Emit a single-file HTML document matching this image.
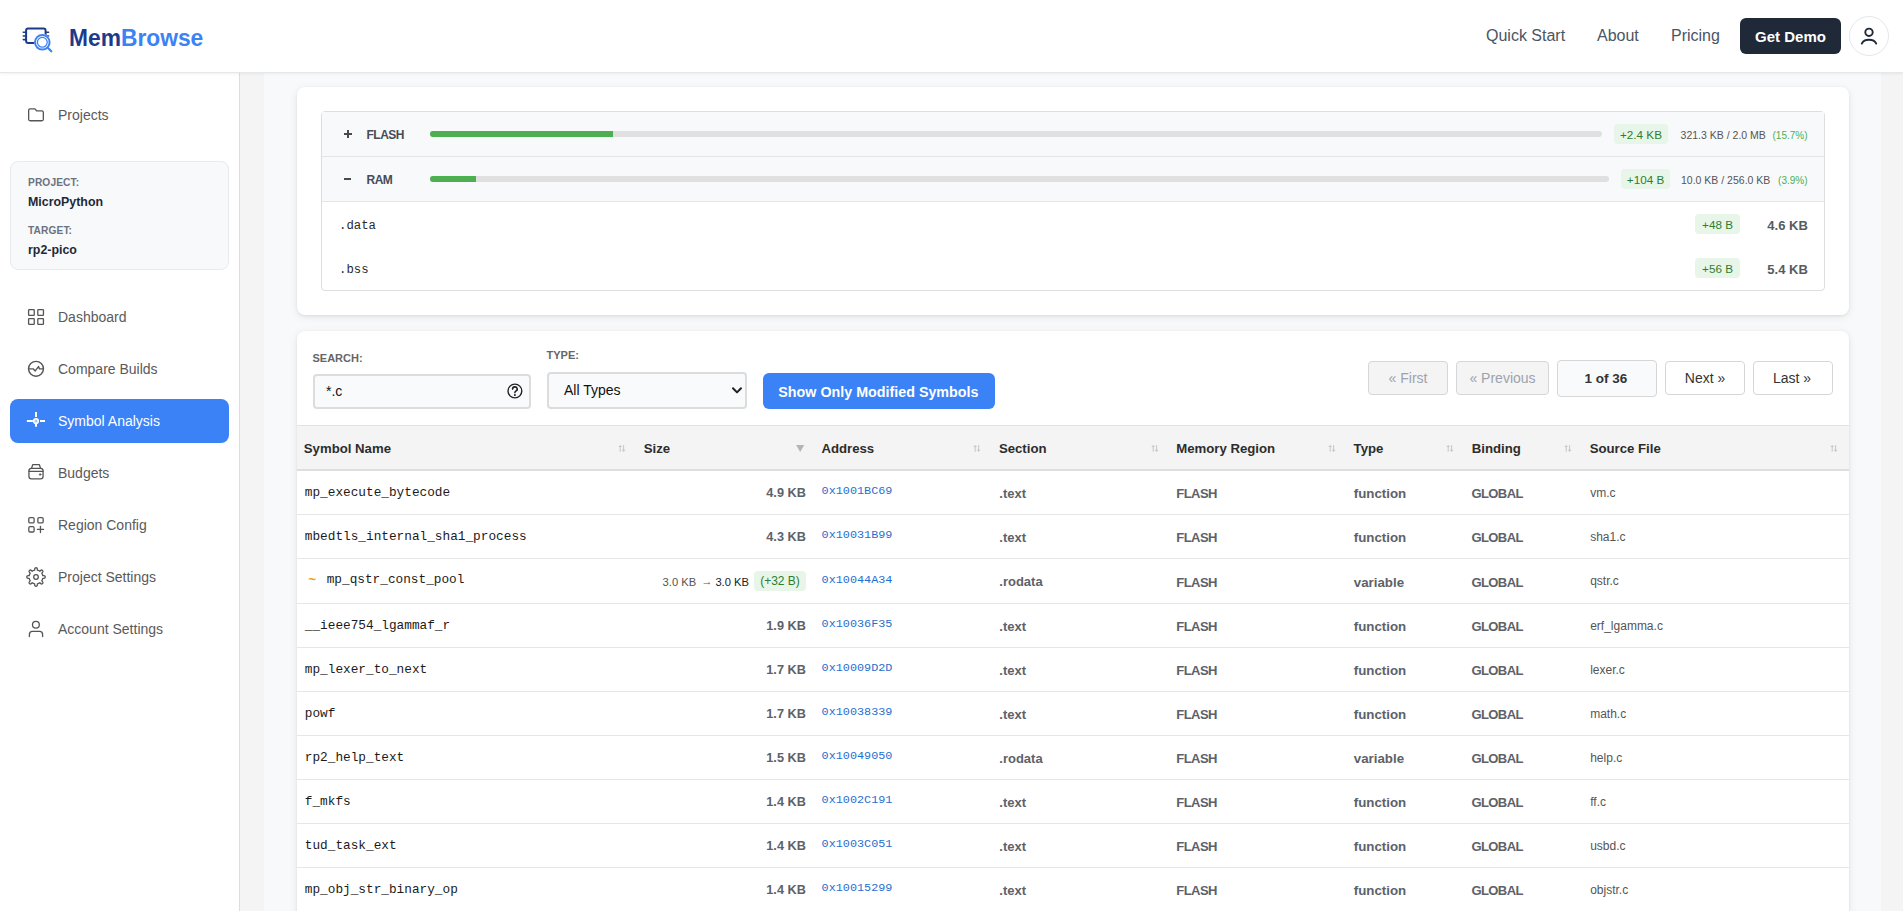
<!DOCTYPE html>
<html><head><meta charset="utf-8">
<style>
*{box-sizing:border-box;margin:0;padding:0}
html,body{width:1903px;height:911px;overflow:hidden}
body{position:relative;background:#f4f4f4;font-family:"Liberation Sans",sans-serif;color:#333}
.abs{position:absolute}
.mono{font-family:"Liberation Mono",monospace}
/* header */
#hdr{position:absolute;left:0;top:0;width:1903px;height:73px;background:#fff;border-bottom:1px solid #e5e7eb;box-shadow:0 1px 3px rgba(0,0,0,.06);z-index:5}
.brand{position:absolute;left:69px;top:25px;font-size:22.8px;font-weight:bold;line-height:26px;letter-spacing:0;transform:scaleY(1.06);transform-origin:0 20px}
.nav{position:absolute;top:27px;font-size:16px;line-height:18px;color:#4b5563}
#demo{position:absolute;left:1740px;top:18px;width:101px;height:36px;border-radius:6px;background:#1f2937;color:#fff;font-weight:bold;font-size:15px;line-height:37px;text-align:center}
#usr{position:absolute;left:1849px;top:16px;width:40px;height:40px;border-radius:50%;border:1px solid #e5e7eb;background:#fff}
/* sidebar */
#side{position:absolute;left:0;top:73px;width:240px;height:838px;background:#fff;border-right:1px solid #dddddd}
.item{position:absolute;left:10px;width:219px;height:44px;border-radius:8px;font-size:14px;color:#5a5a5a;line-height:44px}
.item .t{position:absolute;left:48px;top:0}
.item svg{position:absolute;left:12px;top:8px}
.item.act{background:#3b82f6;color:#fff}
#pcard{position:absolute;left:10px;top:161px;width:219px;height:109px;border-radius:8px;background:#f8f9fb;border:1px solid #e8eaee}
.plab{position:absolute;left:17px;font-size:10.2px;font-weight:bold;color:#6b7280;letter-spacing:.1px;line-height:12px}
.pval{position:absolute;left:17px;font-size:12.4px;font-weight:bold;color:#1f2937;line-height:15px}
/* main */
#inner{position:absolute;left:264px;top:73px;width:1617px;height:838px;background:#f8f9fa}
.badge{background:#e8f5e9;color:#2e7d32;border-radius:4px;text-align:center;white-space:nowrap}
.card{position:absolute;left:297px;width:1552px;background:#fff;border-radius:8px;box-shadow:0 2px 8px rgba(0,0,0,.08),0 1px 3px rgba(0,0,0,.07)}
</style></head>
<body>
<div id="hdr">
  <svg class="abs" style="left:15px;top:15px" width="45" height="45" viewBox="15 15 45 45">
    <rect x="26.1" y="28.6" width="19.5" height="14.3" rx="2" fill="none" stroke="#1e3a8a" stroke-width="2"/>
    <g stroke="#1e3a8a" stroke-width="1.6" stroke-linecap="round"><line x1="23.3" y1="32.3" x2="25.5" y2="32.3"/><line x1="23.3" y1="36" x2="25.5" y2="36"/><line x1="23.3" y1="39.6" x2="25.5" y2="39.6"/><line x1="46.5" y1="32.3" x2="48.6" y2="32.3"/><line x1="46.5" y1="36" x2="48.6" y2="36"/></g>
    <circle cx="42.3" cy="42.3" r="8.3" fill="#fff"/>
    <circle cx="42.3" cy="42.3" r="7.3" fill="none" stroke="#3b82f6" stroke-width="2"/>
    <circle cx="42.3" cy="42.3" r="4.9" fill="none" stroke="#3b82f6" stroke-width="1.3"/>
    <line x1="48.3" y1="48.3" x2="51.3" y2="51.3" stroke="#3b82f6" stroke-width="2.2" stroke-linecap="round"/>
  </svg>
  <div class="brand"><span style="color:#1e3a8a">Mem</span><span style="color:#3b82f6">Browse</span></div>
  <div class="nav" style="left:1486px">Quick Start</div>
  <div class="nav" style="left:1597px">About</div>
  <div class="nav" style="left:1671px">Pricing</div>
  <div id="demo">Get Demo</div>
  <div id="usr"><svg class="abs" style="left:-1px;top:-1px" width="40" height="40" viewBox="1849 16 40 40"><circle cx="1869" cy="32.3" r="3.7" fill="none" stroke="#1f2937" stroke-width="1.9"/><path d="M1861.8 43.6 A7.6 5.6 0 0 1 1876.2 43.6" fill="none" stroke="#1f2937" stroke-width="1.9" stroke-linecap="round"/></svg></div>
</div>

<div id="side">
<div class="item" style="top:20px"><svg width="28" height="28" viewBox="0 0 28 28" fill="none" stroke="#555" stroke-width="1.3" stroke-linecap="round" stroke-linejoin="round"><path d="M6.65 18.25 V9.35 A1.5 1.5 0 0 1 8.15 7.85 H12.9 L14.6 9.8 H19.85 A1.5 1.5 0 0 1 21.35 11.3 V18.25 A1.5 1.5 0 0 1 19.85 19.75 H8.15 A1.5 1.5 0 0 1 6.65 18.25 Z"/></svg><span class="t">Projects</span></div>
<div class="item" style="top:222px"><svg width="28" height="28" viewBox="0 0 28 28" fill="none" stroke="#555" stroke-width="1.3" stroke-linecap="round" stroke-linejoin="round"><rect x="6.6" y="6.65" width="5.65" height="5.65" rx="0.6"/><rect x="15.8" y="6.65" width="5.65" height="5.65" rx="0.6"/><rect x="6.6" y="15.7" width="5.65" height="5.65" rx="0.6"/><rect x="15.8" y="15.7" width="5.65" height="5.65" rx="0.6"/></svg><span class="t">Dashboard</span></div>
<div class="item" style="top:274px"><svg width="28" height="28" viewBox="0 0 28 28" fill="none" stroke="#555" stroke-width="1.3" stroke-linecap="round" stroke-linejoin="round"><circle cx="14" cy="13.85" r="7.45" stroke-width="1.4"/><polyline points="6.6,13.85 11.2,13.85 13.2,15.9 16.5,11.6 17.5,13.85 21.4,13.85" stroke-width="1.4"/></svg><span class="t">Compare Builds</span></div>
<div class="item act" style="top:326px"><svg width="28" height="28" viewBox="0 0 28 28" fill="none" stroke="#555" stroke-width="1.3" stroke-linecap="round" stroke-linejoin="round"><g stroke="#fff" stroke-width="2" stroke-linecap="butt"><line x1="14" y1="4.9" x2="14" y2="9.9"/><line x1="14" y1="16.9" x2="14" y2="19.8"/><line x1="4.9" y1="14" x2="10.9" y2="14"/><line x1="18" y1="14" x2="23" y2="14"/></g><circle cx="14" cy="14" r="2.3" stroke="#fff" stroke-width="1.6" fill="rgba(255,255,255,0.55)"/></svg><span class="t">Symbol Analysis</span></div>
<div class="item" style="top:378px"><svg width="28" height="28" viewBox="0 0 28 28" fill="none" stroke="#555" stroke-width="1.3" stroke-linecap="round" stroke-linejoin="round"><rect x="6.95" y="9.3" width="14.1" height="10.6" rx="2.4"/><line x1="6.95" y1="12.3" x2="21.05" y2="12.3"/><path d="M9.6 9.25 L10.7 5.6 H17.4 L18.5 9.25"/><circle cx="18.1" cy="15.5" r="0.8" fill="#555" stroke-width="0.8"/></svg><span class="t">Budgets</span></div>
<div class="item" style="top:430px"><svg width="28" height="28" viewBox="0 0 28 28" fill="none" stroke="#555" stroke-width="1.3" stroke-linecap="round" stroke-linejoin="round"><rect x="6.8" y="6.65" width="5.3" height="5.3" rx="1.2"/><rect x="15.85" y="6.65" width="5.3" height="5.3" rx="1.2"/><rect x="6.8" y="15.7" width="5.3" height="5.3" rx="1.2"/><line x1="18.45" y1="15.5" x2="18.45" y2="21.5"/><line x1="15.45" y1="18.45" x2="21.55" y2="18.45"/></svg><span class="t">Region Config</span></div>
<div class="item" style="top:482px"><svg width="28" height="28" viewBox="0 0 28 28" fill="none" stroke="#555" stroke-width="1.3" stroke-linecap="round" stroke-linejoin="round"><path d="M12.65 7.23 L12.65 6.10 A1.35 1.35 0 0 1 15.35 6.10 L15.35 7.23 A6.90 6.90 0 0 1 17.83 8.26 L18.63 7.46 A1.35 1.35 0 0 1 20.54 9.37 L19.74 10.17 A6.90 6.90 0 0 1 20.77 12.65 L21.90 12.65 A1.35 1.35 0 0 1 21.90 15.35 L20.77 15.35 A6.90 6.90 0 0 1 19.74 17.83 L20.54 18.63 A1.35 1.35 0 0 1 18.63 20.54 L17.83 19.74 A6.90 6.90 0 0 1 15.35 20.77 L15.35 21.90 A1.35 1.35 0 0 1 12.65 21.90 L12.65 20.77 A6.90 6.90 0 0 1 10.17 19.74 L9.37 20.54 A1.35 1.35 0 0 1 7.46 18.63 L8.26 17.83 A6.90 6.90 0 0 1 7.23 15.35 L6.10 15.35 A1.35 1.35 0 0 1 6.10 12.65 L7.23 12.65 A6.90 6.90 0 0 1 8.26 10.17 L7.46 9.37 A1.35 1.35 0 0 1 9.37 7.46 L10.17 8.26 A6.90 6.90 0 0 1 12.65 7.23 Z" stroke-width="1.3"/><circle cx="14" cy="14" r="2.3"/></svg><span class="t">Project Settings</span></div>
<div class="item" style="top:534px"><svg width="28" height="28" viewBox="0 0 28 28" fill="none" stroke="#555" stroke-width="1.3" stroke-linecap="round" stroke-linejoin="round"><circle cx="13.9" cy="9.7" r="3.4"/><path d="M7.4 21.6 V19.4 A3 3 0 0 1 10.4 16.4 H17.6 A3 3 0 0 1 20.6 19.4 V21.6"/></svg><span class="t">Account Settings</span></div>
<div id="pcard" style="top:88px">
  <div class="plab" style="top:15px">PROJECT:</div>
  <div class="pval" style="top:33px">MicroPython</div>
  <div class="plab" style="top:63px">TARGET:</div>
  <div class="pval" style="top:81px">rp2-pico</div>
</div>
</div>

<div id="inner"></div>
<div class="card" style="top:87px;height:228px"></div>
<!--MAIN-->
<div class="abs" style="left:321.00px;top:111.00px;width:1504.00px;height:180.00px;border:1px solid #dedede;border-radius:4px;overflow:hidden;background:#fff"></div>
<div class="abs" style="left:322.00px;top:112.00px;width:1502.00px;height:44.00px;background:#f8f9fa"></div>
<div class="abs" style="left:322.00px;top:156.00px;width:1502.00px;height:1.00px;background:#e5e5e5"></div>
<div class="abs" style="left:322.00px;top:157.00px;width:1502.00px;height:44.00px;background:#f8f9fa"></div>
<div class="abs" style="left:322.00px;top:201.00px;width:1502.00px;height:1.00px;background:#e5e5e5"></div>
<div class="abs" style="left:343.80px;top:133.00px;width:7.80px;height:2.00px;background:#4a4a4a"></div>
<div class="abs" style="left:346.70px;top:129.90px;width:2.00px;height:8.20px;background:#4a4a4a"></div>
<div class="abs" style="left:343.80px;top:178.00px;width:7.40px;height:2.00px;background:#4a4a4a"></div>
<div class="abs" style="top:128.94px;font-size:12px;line-height:12px;color:#474c55;left:366.50px;font-weight:bold;letter-spacing:-0.5px;;white-space:nowrap">FLASH</div>
<div class="abs" style="top:173.84px;font-size:12px;line-height:12px;color:#474c55;left:366.50px;font-weight:bold;letter-spacing:-0.5px;;white-space:nowrap">RAM</div>
<div class="abs" style="left:430.00px;top:131.00px;width:1172.00px;height:6.00px;background:#e0e0e0;border-radius:3px"></div>
<div class="abs" style="left:430.00px;top:131.00px;width:183.00px;height:6.00px;background:#4caf50;border-radius:3px 0 0 3px"></div>
<div class="abs" style="left:430.00px;top:176.00px;width:1179.00px;height:6.00px;background:#e0e0e0;border-radius:3px"></div>
<div class="abs" style="left:430.00px;top:176.00px;width:46.00px;height:6.00px;background:#4caf50;border-radius:3px 0 0 3px"></div>
<div class="abs badge" style="left:1614.00px;top:124.00px;width:54.00px;height:19.50px;font-size:11.7px;line-height:22.70px">+2.4 KB</div>
<div class="abs" style="top:130.11px;font-size:10.5px;line-height:10.5px;color:#555;right:137.20px;;white-space:nowrap">321.3 KB / 2.0 MB</div>
<div class="abs" style="top:130.53px;font-size:10px;line-height:10px;color:#4caf50;right:95.50px;;white-space:nowrap">(15.7%)</div>
<div class="abs badge" style="left:1621.00px;top:169.00px;width:49.00px;height:19.60px;font-size:11.7px;line-height:22.80px">+104 B</div>
<div class="abs" style="top:175.11px;font-size:10.5px;line-height:10.5px;color:#555;right:132.70px;;white-space:nowrap">10.0 KB / 256.0 KB</div>
<div class="abs" style="top:175.53px;font-size:10px;line-height:10px;color:#4caf50;right:95.50px;;white-space:nowrap">(3.9%)</div>
<div class="abs" style="top:219.77px;font-size:12.3px;line-height:12.3px;color:#2a2a2a;left:339.00px;font-family:'Liberation Mono',monospace;;white-space:nowrap">.data</div>
<div class="abs" style="top:263.67px;font-size:12.3px;line-height:12.3px;color:#2a2a2a;left:339.00px;font-family:'Liberation Mono',monospace;;white-space:nowrap">.bss</div>
<div class="abs badge" style="left:1695.00px;top:214.00px;width:45.00px;height:19.60px;font-size:11.7px;line-height:22.80px">+48 B</div>
<div class="abs badge" style="left:1695.00px;top:258.00px;width:45.00px;height:19.70px;font-size:11.7px;line-height:22.90px">+56 B</div>
<div class="abs" style="top:218.90px;font-size:13px;line-height:13px;color:#555b63;right:95.20px;font-weight:bold;;white-space:nowrap">4.6 KB</div>
<div class="abs" style="top:262.90px;font-size:13px;line-height:13px;color:#555b63;right:95.20px;font-weight:bold;;white-space:nowrap">5.4 KB</div>
<div class="card" style="top:331px;height:600px"></div>
<div class="abs" style="top:352.59px;font-size:11px;line-height:11px;color:#666;left:312.50px;font-weight:bold;;white-space:nowrap">SEARCH:</div>
<div class="abs" style="top:350.49px;font-size:11px;line-height:11px;color:#666;left:546.50px;font-weight:bold;;white-space:nowrap">TYPE:</div>
<div class="abs" style="left:313.00px;top:373.50px;width:218.00px;height:35.00px;border:2px solid #dcdcdc;border-radius:4px;background:#f9fafb"></div>
<div class="abs" style="top:384.05px;font-size:14px;line-height:14px;color:#111;left:326.00px;;white-space:nowrap">*.c</div>
<svg class="abs" style="left:505px;top:381px" width="20" height="20" viewBox="505 381 20 20"><circle cx="514.9" cy="391" r="6.9" fill="none" stroke="#222" stroke-width="1.4"/><path d="M512.6 389.1 A2.3 2.2 0 1 1 515.8 391.1 Q514.9 391.6 514.9 392.6" fill="none" stroke="#222" stroke-width="1.6" stroke-linecap="round"/><circle cx="514.9" cy="394.9" r="1" fill="#222"/></svg>
<div class="abs" style="left:547.00px;top:371.50px;width:200.00px;height:37.00px;border:2px solid #dcdcdc;border-radius:4px;background:#f9fafb"></div>
<div class="abs" style="top:383.25px;font-size:14px;line-height:14px;color:#111;left:564.00px;;white-space:nowrap">All Types</div>
<svg class="abs" style="left:728px;top:383px" width="18" height="14" viewBox="728 383 18 14"><polyline points="733,388.2 737,392.4 741,388.2" fill="none" stroke="#222" stroke-width="2" stroke-linecap="round" stroke-linejoin="round"/></svg>
<div class="abs" style="left:763.00px;top:373.00px;width:232.00px;height:36.00px;background:#3b82f6;border-radius:6px"></div>
<div class="abs" style="top:385.20px;font-size:14.3px;line-height:14.3px;color:#fff;left:778.30px;font-weight:bold;;white-space:nowrap">Show Only Modified Symbols</div>
<div class="abs" style="left:1368.00px;top:361.00px;width:80.00px;height:34.00px;background:#f4f4f4;border:1px solid #d6d6d6;border-radius:4px"></div><div class="abs" style="left:1368.00px;width:80px;top:371.15px;font-size:14px;line-height:14px;color:#9ca3af;text-align:center;white-space:nowrap;">&laquo; First</div>
<div class="abs" style="left:1456.00px;top:361.00px;width:93.00px;height:34.00px;background:#f4f4f4;border:1px solid #d6d6d6;border-radius:4px"></div><div class="abs" style="left:1456.00px;width:93px;top:371.15px;font-size:14px;line-height:14px;color:#9ca3af;text-align:center;white-space:nowrap;">&laquo; Previous</div>
<div class="abs" style="left:1557.00px;top:360.00px;width:100.00px;height:37.00px;background:#f9fafb;border:1px solid #d6d6d6;border-radius:4px"></div><div class="abs" style="left:1556.00px;width:100px;top:372.47px;font-size:13.5px;line-height:13.5px;color:#333;text-align:center;white-space:nowrap;font-weight:bold">1 of 36</div>
<div class="abs" style="left:1665.00px;top:361.00px;width:80.00px;height:34.00px;background:#fff;border:1px solid #d6d6d6;border-radius:4px"></div><div class="abs" style="left:1665.00px;width:80px;top:371.15px;font-size:14px;line-height:14px;color:#333;text-align:center;white-space:nowrap;">Next &raquo;</div>
<div class="abs" style="left:1753.00px;top:361.00px;width:80.00px;height:34.00px;background:#fff;border:1px solid #d6d6d6;border-radius:4px"></div><div class="abs" style="left:1752.00px;width:80px;top:371.15px;font-size:14px;line-height:14px;color:#333;text-align:center;white-space:nowrap;">Last &raquo;</div>
<div class="abs" style="left:297.00px;top:425.00px;width:1552.00px;height:1.00px;background:#e3e3e3"></div>
<div class="abs" style="left:297.00px;top:426.00px;width:1552.00px;height:43.00px;background:#f4f4f4"></div>
<div class="abs" style="left:297.00px;top:469.00px;width:1552.00px;height:2.00px;background:#dedede"></div>
<div class="abs" style="top:441.63px;font-size:13.2px;line-height:13.2px;color:#2d2d2d;left:303.80px;font-weight:bold;;white-space:nowrap">Symbol Name</div>
<svg class="abs" style="left:618.20px;top:444px" width="9" height="9" viewBox="0 0 9 9" fill="#c6c6c6" stroke="#c6c6c6"><line x1="2.2" y1="2" x2="2.2" y2="7.8" stroke-width="1"/><polygon points="0.3,3.1 2.2,0.9 4.1,3.1" stroke="none"/><line x1="5.6" y1="1.1" x2="5.6" y2="6.9" stroke-width="1"/><polygon points="3.7,5.8 5.6,8 7.5,5.8" stroke="none"/></svg>
<div class="abs" style="top:441.63px;font-size:13.2px;line-height:13.2px;color:#2d2d2d;left:643.80px;font-weight:bold;;white-space:nowrap">Size</div>
<svg class="abs" style="left:795.70px;top:444px" width="10" height="9" viewBox="0 0 10 9"><polygon points="0.1,1 8.3,1 4.2,7.9" fill="#b5b5b5"/></svg>
<div class="abs" style="top:441.63px;font-size:13.2px;line-height:13.2px;color:#2d2d2d;left:821.40px;font-weight:bold;;white-space:nowrap">Address</div>
<svg class="abs" style="left:973.20px;top:444px" width="9" height="9" viewBox="0 0 9 9" fill="#c6c6c6" stroke="#c6c6c6"><line x1="2.2" y1="2" x2="2.2" y2="7.8" stroke-width="1"/><polygon points="0.3,3.1 2.2,0.9 4.1,3.1" stroke="none"/><line x1="5.6" y1="1.1" x2="5.6" y2="6.9" stroke-width="1"/><polygon points="3.7,5.8 5.6,8 7.5,5.8" stroke="none"/></svg>
<div class="abs" style="top:441.63px;font-size:13.2px;line-height:13.2px;color:#2d2d2d;left:998.90px;font-weight:bold;;white-space:nowrap">Section</div>
<svg class="abs" style="left:1151.20px;top:444px" width="9" height="9" viewBox="0 0 9 9" fill="#c6c6c6" stroke="#c6c6c6"><line x1="2.2" y1="2" x2="2.2" y2="7.8" stroke-width="1"/><polygon points="0.3,3.1 2.2,0.9 4.1,3.1" stroke="none"/><line x1="5.6" y1="1.1" x2="5.6" y2="6.9" stroke-width="1"/><polygon points="3.7,5.8 5.6,8 7.5,5.8" stroke="none"/></svg>
<div class="abs" style="top:441.63px;font-size:13.2px;line-height:13.2px;color:#2d2d2d;left:1176.20px;font-weight:bold;;white-space:nowrap">Memory Region</div>
<svg class="abs" style="left:1328.20px;top:444px" width="9" height="9" viewBox="0 0 9 9" fill="#c6c6c6" stroke="#c6c6c6"><line x1="2.2" y1="2" x2="2.2" y2="7.8" stroke-width="1"/><polygon points="0.3,3.1 2.2,0.9 4.1,3.1" stroke="none"/><line x1="5.6" y1="1.1" x2="5.6" y2="6.9" stroke-width="1"/><polygon points="3.7,5.8 5.6,8 7.5,5.8" stroke="none"/></svg>
<div class="abs" style="top:441.63px;font-size:13.2px;line-height:13.2px;color:#2d2d2d;left:1353.60px;font-weight:bold;;white-space:nowrap">Type</div>
<svg class="abs" style="left:1446.20px;top:444px" width="9" height="9" viewBox="0 0 9 9" fill="#c6c6c6" stroke="#c6c6c6"><line x1="2.2" y1="2" x2="2.2" y2="7.8" stroke-width="1"/><polygon points="0.3,3.1 2.2,0.9 4.1,3.1" stroke="none"/><line x1="5.6" y1="1.1" x2="5.6" y2="6.9" stroke-width="1"/><polygon points="3.7,5.8 5.6,8 7.5,5.8" stroke="none"/></svg>
<div class="abs" style="top:441.63px;font-size:13.2px;line-height:13.2px;color:#2d2d2d;left:1471.80px;font-weight:bold;;white-space:nowrap">Binding</div>
<svg class="abs" style="left:1564.20px;top:444px" width="9" height="9" viewBox="0 0 9 9" fill="#c6c6c6" stroke="#c6c6c6"><line x1="2.2" y1="2" x2="2.2" y2="7.8" stroke-width="1"/><polygon points="0.3,3.1 2.2,0.9 4.1,3.1" stroke="none"/><line x1="5.6" y1="1.1" x2="5.6" y2="6.9" stroke-width="1"/><polygon points="3.7,5.8 5.6,8 7.5,5.8" stroke="none"/></svg>
<div class="abs" style="top:441.63px;font-size:13.2px;line-height:13.2px;color:#2d2d2d;left:1589.70px;font-weight:bold;;white-space:nowrap">Source File</div>
<svg class="abs" style="left:1830.20px;top:444px" width="9" height="9" viewBox="0 0 9 9" fill="#c6c6c6" stroke="#c6c6c6"><line x1="2.2" y1="2" x2="2.2" y2="7.8" stroke-width="1"/><polygon points="0.3,3.1 2.2,0.9 4.1,3.1" stroke="none"/><line x1="5.6" y1="1.1" x2="5.6" y2="6.9" stroke-width="1"/><polygon points="3.7,5.8 5.6,8 7.5,5.8" stroke="none"/></svg>
<div class="abs" style="left:297.00px;top:514.00px;width:1552.00px;height:1.00px;background:#e6e6e6"></div>
<div class="abs" style="top:487.13px;font-size:12.75px;line-height:12.75px;color:#1a1a1a;left:304.80px;font-family:'Liberation Mono',monospace;;white-space:nowrap">mp_execute_bytecode</div>
<div class="abs" style="top:486.95px;font-size:12.7px;line-height:12.7px;color:#5d6269;right:1097.20px;font-weight:bold;;white-space:nowrap">4.9 KB</div>
<div class="abs" style="top:486.16px;font-size:11.8px;line-height:11.8px;color:#1f6fd1;left:821.60px;font-family:'Liberation Mono',monospace;;white-space:nowrap">0x1001BC69</div>
<div class="abs" style="top:486.70px;font-size:13px;line-height:13px;color:#5d6269;left:999.30px;font-weight:bold;;white-space:nowrap">.text</div>
<div class="abs" style="top:487.00px;font-size:13px;line-height:13px;color:#5d6269;left:1176.30px;font-weight:bold;letter-spacing:-0.55px;;white-space:nowrap">FLASH</div>
<div class="abs" style="top:487.24px;font-size:13.3px;line-height:13.3px;color:#5d6269;left:1353.80px;font-weight:bold;;white-space:nowrap">function</div>
<div class="abs" style="top:487.00px;font-size:13px;line-height:13px;color:#5d6269;left:1471.50px;font-weight:bold;letter-spacing:-0.6px;;white-space:nowrap">GLOBAL</div>
<div class="abs" style="top:486.94px;font-size:12px;line-height:12px;color:#555;left:1590.20px;;white-space:nowrap">vm.c</div>
<div class="abs" style="left:297.00px;top:558.00px;width:1552.00px;height:1.00px;background:#e6e6e6"></div>
<div class="abs" style="top:531.13px;font-size:12.75px;line-height:12.75px;color:#1a1a1a;left:304.80px;font-family:'Liberation Mono',monospace;;white-space:nowrap">mbedtls_internal_sha1_process</div>
<div class="abs" style="top:530.95px;font-size:12.7px;line-height:12.7px;color:#5d6269;right:1097.20px;font-weight:bold;;white-space:nowrap">4.3 KB</div>
<div class="abs" style="top:530.16px;font-size:11.8px;line-height:11.8px;color:#1f6fd1;left:821.60px;font-family:'Liberation Mono',monospace;;white-space:nowrap">0x10031B99</div>
<div class="abs" style="top:530.70px;font-size:13px;line-height:13px;color:#5d6269;left:999.30px;font-weight:bold;;white-space:nowrap">.text</div>
<div class="abs" style="top:531.00px;font-size:13px;line-height:13px;color:#5d6269;left:1176.30px;font-weight:bold;letter-spacing:-0.55px;;white-space:nowrap">FLASH</div>
<div class="abs" style="top:531.24px;font-size:13.3px;line-height:13.3px;color:#5d6269;left:1353.80px;font-weight:bold;;white-space:nowrap">function</div>
<div class="abs" style="top:531.00px;font-size:13px;line-height:13px;color:#5d6269;left:1471.50px;font-weight:bold;letter-spacing:-0.6px;;white-space:nowrap">GLOBAL</div>
<div class="abs" style="top:530.94px;font-size:12px;line-height:12px;color:#555;left:1590.20px;;white-space:nowrap">sha1.c</div>
<div class="abs" style="left:297.00px;top:603.00px;width:1552.00px;height:1.00px;background:#e6e6e6"></div>
<div class="abs" style="top:573.65px;font-size:13.5px;line-height:13.5px;color:#f59e0b;left:308.30px;font-weight:bold;font-family:'Liberation Mono',monospace;;white-space:nowrap">~</div>
<div class="abs" style="top:574.43px;font-size:12.75px;line-height:12.75px;color:#1a1a1a;left:326.70px;font-family:'Liberation Mono',monospace;;white-space:nowrap">mp_qstr_const_pool</div>
<div class="abs" style="top:576.52px;font-size:11.2px;line-height:11.2px;color:#555;left:662.60px;;white-space:nowrap">3.0 KB</div>
<div class="abs" style="top:576.29px;font-size:11px;line-height:11px;color:#555;left:701.50px;;white-space:nowrap">&rarr;</div>
<div class="abs" style="top:576.52px;font-size:11.2px;line-height:11.2px;color:#222;left:715.40px;;white-space:nowrap">3.0 KB</div>
<div class="abs badge" style="left:754px;top:571.20px;width:52px;height:19.6px;font-size:12px;line-height:20.6px">(+32 B)</div>
<div class="abs" style="top:574.66px;font-size:11.8px;line-height:11.8px;color:#1f6fd1;left:821.60px;font-family:'Liberation Mono',monospace;;white-space:nowrap">0x10044A34</div>
<div class="abs" style="top:575.20px;font-size:13px;line-height:13px;color:#5d6269;left:999.30px;font-weight:bold;;white-space:nowrap">.rodata</div>
<div class="abs" style="top:575.50px;font-size:13px;line-height:13px;color:#5d6269;left:1176.30px;font-weight:bold;letter-spacing:-0.55px;;white-space:nowrap">FLASH</div>
<div class="abs" style="top:575.74px;font-size:13.3px;line-height:13.3px;color:#5d6269;left:1353.80px;font-weight:bold;;white-space:nowrap">variable</div>
<div class="abs" style="top:575.50px;font-size:13px;line-height:13px;color:#5d6269;left:1471.50px;font-weight:bold;letter-spacing:-0.6px;;white-space:nowrap">GLOBAL</div>
<div class="abs" style="top:575.44px;font-size:12px;line-height:12px;color:#555;left:1590.20px;;white-space:nowrap">qstr.c</div>
<div class="abs" style="left:297.00px;top:647.00px;width:1552.00px;height:1.00px;background:#e6e6e6"></div>
<div class="abs" style="top:620.13px;font-size:12.75px;line-height:12.75px;color:#1a1a1a;left:304.80px;font-family:'Liberation Mono',monospace;;white-space:nowrap">__ieee754_lgammaf_r</div>
<div class="abs" style="top:619.95px;font-size:12.7px;line-height:12.7px;color:#5d6269;right:1097.20px;font-weight:bold;;white-space:nowrap">1.9 KB</div>
<div class="abs" style="top:619.16px;font-size:11.8px;line-height:11.8px;color:#1f6fd1;left:821.60px;font-family:'Liberation Mono',monospace;;white-space:nowrap">0x10036F35</div>
<div class="abs" style="top:619.70px;font-size:13px;line-height:13px;color:#5d6269;left:999.30px;font-weight:bold;;white-space:nowrap">.text</div>
<div class="abs" style="top:620.00px;font-size:13px;line-height:13px;color:#5d6269;left:1176.30px;font-weight:bold;letter-spacing:-0.55px;;white-space:nowrap">FLASH</div>
<div class="abs" style="top:620.24px;font-size:13.3px;line-height:13.3px;color:#5d6269;left:1353.80px;font-weight:bold;;white-space:nowrap">function</div>
<div class="abs" style="top:620.00px;font-size:13px;line-height:13px;color:#5d6269;left:1471.50px;font-weight:bold;letter-spacing:-0.6px;;white-space:nowrap">GLOBAL</div>
<div class="abs" style="top:619.94px;font-size:12px;line-height:12px;color:#555;left:1590.20px;;white-space:nowrap">erf_lgamma.c</div>
<div class="abs" style="left:297.00px;top:691.00px;width:1552.00px;height:1.00px;background:#e6e6e6"></div>
<div class="abs" style="top:664.13px;font-size:12.75px;line-height:12.75px;color:#1a1a1a;left:304.80px;font-family:'Liberation Mono',monospace;;white-space:nowrap">mp_lexer_to_next</div>
<div class="abs" style="top:663.95px;font-size:12.7px;line-height:12.7px;color:#5d6269;right:1097.20px;font-weight:bold;;white-space:nowrap">1.7 KB</div>
<div class="abs" style="top:663.16px;font-size:11.8px;line-height:11.8px;color:#1f6fd1;left:821.60px;font-family:'Liberation Mono',monospace;;white-space:nowrap">0x10009D2D</div>
<div class="abs" style="top:663.70px;font-size:13px;line-height:13px;color:#5d6269;left:999.30px;font-weight:bold;;white-space:nowrap">.text</div>
<div class="abs" style="top:664.00px;font-size:13px;line-height:13px;color:#5d6269;left:1176.30px;font-weight:bold;letter-spacing:-0.55px;;white-space:nowrap">FLASH</div>
<div class="abs" style="top:664.24px;font-size:13.3px;line-height:13.3px;color:#5d6269;left:1353.80px;font-weight:bold;;white-space:nowrap">function</div>
<div class="abs" style="top:664.00px;font-size:13px;line-height:13px;color:#5d6269;left:1471.50px;font-weight:bold;letter-spacing:-0.6px;;white-space:nowrap">GLOBAL</div>
<div class="abs" style="top:663.94px;font-size:12px;line-height:12px;color:#555;left:1590.20px;;white-space:nowrap">lexer.c</div>
<div class="abs" style="left:297.00px;top:735.00px;width:1552.00px;height:1.00px;background:#e6e6e6"></div>
<div class="abs" style="top:708.13px;font-size:12.75px;line-height:12.75px;color:#1a1a1a;left:304.80px;font-family:'Liberation Mono',monospace;;white-space:nowrap">powf</div>
<div class="abs" style="top:707.95px;font-size:12.7px;line-height:12.7px;color:#5d6269;right:1097.20px;font-weight:bold;;white-space:nowrap">1.7 KB</div>
<div class="abs" style="top:707.16px;font-size:11.8px;line-height:11.8px;color:#1f6fd1;left:821.60px;font-family:'Liberation Mono',monospace;;white-space:nowrap">0x10038339</div>
<div class="abs" style="top:707.70px;font-size:13px;line-height:13px;color:#5d6269;left:999.30px;font-weight:bold;;white-space:nowrap">.text</div>
<div class="abs" style="top:708.00px;font-size:13px;line-height:13px;color:#5d6269;left:1176.30px;font-weight:bold;letter-spacing:-0.55px;;white-space:nowrap">FLASH</div>
<div class="abs" style="top:708.24px;font-size:13.3px;line-height:13.3px;color:#5d6269;left:1353.80px;font-weight:bold;;white-space:nowrap">function</div>
<div class="abs" style="top:708.00px;font-size:13px;line-height:13px;color:#5d6269;left:1471.50px;font-weight:bold;letter-spacing:-0.6px;;white-space:nowrap">GLOBAL</div>
<div class="abs" style="top:707.94px;font-size:12px;line-height:12px;color:#555;left:1590.20px;;white-space:nowrap">math.c</div>
<div class="abs" style="left:297.00px;top:779.00px;width:1552.00px;height:1.00px;background:#e6e6e6"></div>
<div class="abs" style="top:752.13px;font-size:12.75px;line-height:12.75px;color:#1a1a1a;left:304.80px;font-family:'Liberation Mono',monospace;;white-space:nowrap">rp2_help_text</div>
<div class="abs" style="top:751.95px;font-size:12.7px;line-height:12.7px;color:#5d6269;right:1097.20px;font-weight:bold;;white-space:nowrap">1.5 KB</div>
<div class="abs" style="top:751.16px;font-size:11.8px;line-height:11.8px;color:#1f6fd1;left:821.60px;font-family:'Liberation Mono',monospace;;white-space:nowrap">0x10049050</div>
<div class="abs" style="top:751.70px;font-size:13px;line-height:13px;color:#5d6269;left:999.30px;font-weight:bold;;white-space:nowrap">.rodata</div>
<div class="abs" style="top:752.00px;font-size:13px;line-height:13px;color:#5d6269;left:1176.30px;font-weight:bold;letter-spacing:-0.55px;;white-space:nowrap">FLASH</div>
<div class="abs" style="top:752.24px;font-size:13.3px;line-height:13.3px;color:#5d6269;left:1353.80px;font-weight:bold;;white-space:nowrap">variable</div>
<div class="abs" style="top:752.00px;font-size:13px;line-height:13px;color:#5d6269;left:1471.50px;font-weight:bold;letter-spacing:-0.6px;;white-space:nowrap">GLOBAL</div>
<div class="abs" style="top:751.94px;font-size:12px;line-height:12px;color:#555;left:1590.20px;;white-space:nowrap">help.c</div>
<div class="abs" style="left:297.00px;top:823.00px;width:1552.00px;height:1.00px;background:#e6e6e6"></div>
<div class="abs" style="top:796.13px;font-size:12.75px;line-height:12.75px;color:#1a1a1a;left:304.80px;font-family:'Liberation Mono',monospace;;white-space:nowrap">f_mkfs</div>
<div class="abs" style="top:795.95px;font-size:12.7px;line-height:12.7px;color:#5d6269;right:1097.20px;font-weight:bold;;white-space:nowrap">1.4 KB</div>
<div class="abs" style="top:795.16px;font-size:11.8px;line-height:11.8px;color:#1f6fd1;left:821.60px;font-family:'Liberation Mono',monospace;;white-space:nowrap">0x1002C191</div>
<div class="abs" style="top:795.70px;font-size:13px;line-height:13px;color:#5d6269;left:999.30px;font-weight:bold;;white-space:nowrap">.text</div>
<div class="abs" style="top:796.00px;font-size:13px;line-height:13px;color:#5d6269;left:1176.30px;font-weight:bold;letter-spacing:-0.55px;;white-space:nowrap">FLASH</div>
<div class="abs" style="top:796.24px;font-size:13.3px;line-height:13.3px;color:#5d6269;left:1353.80px;font-weight:bold;;white-space:nowrap">function</div>
<div class="abs" style="top:796.00px;font-size:13px;line-height:13px;color:#5d6269;left:1471.50px;font-weight:bold;letter-spacing:-0.6px;;white-space:nowrap">GLOBAL</div>
<div class="abs" style="top:795.94px;font-size:12px;line-height:12px;color:#555;left:1590.20px;;white-space:nowrap">ff.c</div>
<div class="abs" style="left:297.00px;top:867.00px;width:1552.00px;height:1.00px;background:#e6e6e6"></div>
<div class="abs" style="top:840.13px;font-size:12.75px;line-height:12.75px;color:#1a1a1a;left:304.80px;font-family:'Liberation Mono',monospace;;white-space:nowrap">tud_task_ext</div>
<div class="abs" style="top:839.95px;font-size:12.7px;line-height:12.7px;color:#5d6269;right:1097.20px;font-weight:bold;;white-space:nowrap">1.4 KB</div>
<div class="abs" style="top:839.16px;font-size:11.8px;line-height:11.8px;color:#1f6fd1;left:821.60px;font-family:'Liberation Mono',monospace;;white-space:nowrap">0x1003C051</div>
<div class="abs" style="top:839.70px;font-size:13px;line-height:13px;color:#5d6269;left:999.30px;font-weight:bold;;white-space:nowrap">.text</div>
<div class="abs" style="top:840.00px;font-size:13px;line-height:13px;color:#5d6269;left:1176.30px;font-weight:bold;letter-spacing:-0.55px;;white-space:nowrap">FLASH</div>
<div class="abs" style="top:840.24px;font-size:13.3px;line-height:13.3px;color:#5d6269;left:1353.80px;font-weight:bold;;white-space:nowrap">function</div>
<div class="abs" style="top:840.00px;font-size:13px;line-height:13px;color:#5d6269;left:1471.50px;font-weight:bold;letter-spacing:-0.6px;;white-space:nowrap">GLOBAL</div>
<div class="abs" style="top:839.94px;font-size:12px;line-height:12px;color:#555;left:1590.20px;;white-space:nowrap">usbd.c</div>
<div class="abs" style="top:884.13px;font-size:12.75px;line-height:12.75px;color:#1a1a1a;left:304.80px;font-family:'Liberation Mono',monospace;;white-space:nowrap">mp_obj_str_binary_op</div>
<div class="abs" style="top:883.95px;font-size:12.7px;line-height:12.7px;color:#5d6269;right:1097.20px;font-weight:bold;;white-space:nowrap">1.4 KB</div>
<div class="abs" style="top:883.16px;font-size:11.8px;line-height:11.8px;color:#1f6fd1;left:821.60px;font-family:'Liberation Mono',monospace;;white-space:nowrap">0x10015299</div>
<div class="abs" style="top:883.70px;font-size:13px;line-height:13px;color:#5d6269;left:999.30px;font-weight:bold;;white-space:nowrap">.text</div>
<div class="abs" style="top:884.00px;font-size:13px;line-height:13px;color:#5d6269;left:1176.30px;font-weight:bold;letter-spacing:-0.55px;;white-space:nowrap">FLASH</div>
<div class="abs" style="top:884.24px;font-size:13.3px;line-height:13.3px;color:#5d6269;left:1353.80px;font-weight:bold;;white-space:nowrap">function</div>
<div class="abs" style="top:884.00px;font-size:13px;line-height:13px;color:#5d6269;left:1471.50px;font-weight:bold;letter-spacing:-0.6px;;white-space:nowrap">GLOBAL</div>
<div class="abs" style="top:883.94px;font-size:12px;line-height:12px;color:#555;left:1590.20px;;white-space:nowrap">objstr.c</div>
<!--/MAIN-->
</body></html>
